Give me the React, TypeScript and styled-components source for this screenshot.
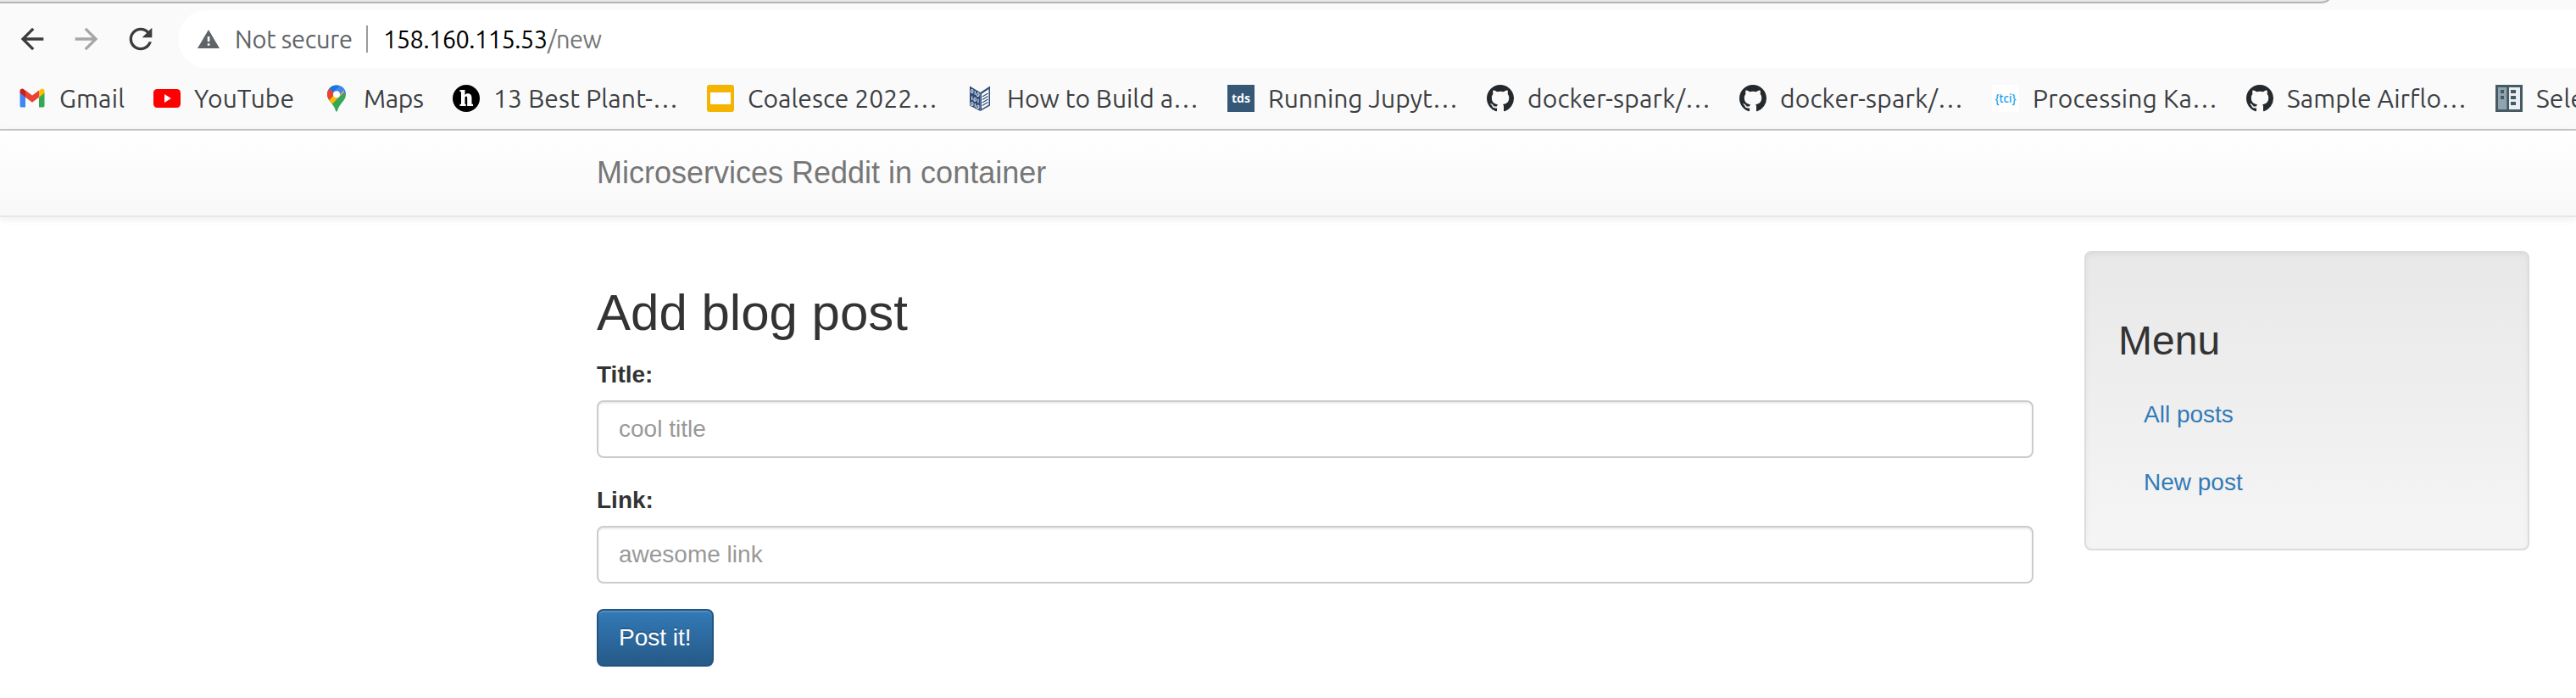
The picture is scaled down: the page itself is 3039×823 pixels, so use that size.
import React, { useLayoutEffect, useRef, useState } from "react";
import styled, { createGlobalStyle } from "styled-components";

const GlobalStyle = createGlobalStyle`
  *, *::before, *::after { box-sizing: border-box; }
  html, body { margin: 0; padding: 0; background: #fff; overflow: hidden; }
  body {
    font-family: "Liberation Sans", Arial, sans-serif;
    font-size: 28px;
    line-height: 40px;
    color: #333;
  }
`;

const chromeFont = `Ubuntu, "Noto Sans", sans-serif`;

/* ---------- browser chrome ---------- */

const Browser = styled.header`
  width: 100%;
  height: 154px;
  background: #fafafa;
  border-bottom: 2px solid #c6c6c6;
  overflow: hidden;
`;

const TabStrip = styled.div`
  height: 12px;
  overflow: hidden;
`;

const TabStripEdge = styled.div`
  width: 2754px;
  height: 24px;
  margin-top: -20px;
  background: #e8e8e8;
  border-right: 2px solid #b4b4b4;
  border-bottom: 2px solid #b4b4b4;
  border-bottom-right-radius: 16px;
`;

const Toolbar = styled.div`
  display: flex;
  align-items: center;
  height: 68px;
  padding-left: 18px;
`;

const NavIcon = styled.svg<{ $muted?: boolean }>`
  flex: none;
  width: 40px;
  height: 40px;
  margin-right: 24px;
  fill: ${(p) => (p.$muted ? "#a6a6a6" : "#3c3c3c")};
`;

const AddressBar = styled.div`
  display: flex;
  align-items: center;
  flex: 1;
  height: 68px;
  padding-left: 23px;
  background: #fff;
  border-radius: 34px 0 0 34px;
  font-family: ${chromeFont};
  font-size: 29px;
  color: #5f6368;
`;

const WarningIcon = styled.svg`
  width: 26px;
  height: 22px;
  margin-right: 18px;
`;

const Divider = styled.span`
  width: 2px;
  height: 32px;
  margin: 0 18px 0 16px;
  background: #9a9a9c;
`;

const Bookmarks = styled.nav`
  display: flex;
  align-items: center;
  gap: 34px;
  height: 72px;
  padding-left: 22px;
  font-family: ${chromeFont};
  font-size: 30px;
  color: #3c4043;
`;

const Bookmark = styled.a`
  display: flex;
  flex: none;
  align-items: center;
  gap: 16px;
  color: inherit;
`;

const Favicon = styled.svg`
  flex: none;
  width: 32px;
  height: 32px;
`;

const LabelBox = styled.span<{ $width: number; $color?: string }>`
  display: block;
  flex: none;
  width: ${(p) => p.$width}px;
  color: ${(p) => p.$color ?? "inherit"};
  white-space: nowrap;
`;

/* Spreads a label's letters so that it fills its slot in the toolbar. */
function Label({ text, width, color }: { text: string; width: number; color?: string }) {
  const ref = useRef<HTMLSpanElement>(null);
  const [spacing, setSpacing] = useState(0);
  useLayoutEffect(() => {
    if (ref.current) {
      const natural = ref.current.getBoundingClientRect().width;
      setSpacing((width - natural) / (text.length - 1));
    }
  }, [text, width]);
  return (
    <LabelBox $width={width} $color={color}>
      <span ref={ref} style={{ letterSpacing: spacing }}>{text}</span>
    </LabelBox>
  );
}

const GmailIcon = () => (
  <Favicon viewBox="0 0 32 32">
    <path d="M1.500 9v15.500A1.8 1.8 0 0 0 3.300 26.600H8V14.300z" fill="#4285f4" />
    <path d="M24 14.300v12.300h4.700a1.800 1.800 0 0 0 1.800-1.800V9z" fill="#34a853" />
    <path d="M24 7.200v7.600l6.500-5.300V7.700c0-2.600-2.700-4-4.500-2.400z" fill="#fbbc04" />
    <path d="M8 14.800V6.500l8 6 8-6v8.300l-8 6z" fill="#ea4335" />
    <path d="M1.500 7.700v1.800l6.500 5.300V6.800L6 5.300C4.200 3.700 1.500 5.100 1.500 7.700z" fill="#c5221f" />
  </Favicon>
);

const YouTubeIcon = () => (
  <Favicon viewBox="0 0 32 32">
    <rect x="0" y="5" width="32" height="22" rx="4.500" fill="#f00" />
    <path d="M13 11v10l7.800-5z" fill="#fff" />
  </Favicon>
);

const MapsIcon = () => (
  <Favicon viewBox="0 0 32 32">
    <defs>
      <clipPath id="pin">
        <path d="M16 0.500C9.700.5 5 5.300 5 11.300c0 4.200 2 6.500 4.600 9.700C12.300 24.300 14 27 15 30.700c.4 1.200 1.600 1.200 2 0C18 27 19.700 24.300 22.400 21c2.600-3.200 4.600-5.500 4.600-9.700C27 5.300 22.300.5 16 .5z" />
      </clipPath>
    </defs>
    <g clipPath="url(#pin)">
      <rect width="32" height="32" fill="#34a853" />
      <path d="M4 22 27 -2 34 4 10 22z" fill="#4285f4" />
      <path d="M3 18 16 11 25 5 24.500 9 10.500 23z" fill="#fbbc04" />
      <path d="M16 11 24 2 32 0 25.500 5.500 16 16z" fill="#4285f4" />
      <path d="M3 3 8 4.500 15 10 5.500 20 0 14z" fill="#ea4335" />
      <path d="M7 4 12 0H20L19.500 1.500 12.500 9z" fill="#1a73e8" />
      <path d="M19.500 1 12.500 9 16 12 24.500 3z" fill="#4285f4" />
    </g>
    <circle cx="16" cy="11.300" r="4" fill="#fff" />
  </Favicon>
);

const HIcon = () => (
  <Favicon viewBox="0 0 32 32">
    <circle cx="16" cy="16" r="16" fill="#000" />
    <path d="M8.500 6H14.500v6c.9-1.200 2-1.800 3.400-1.800 3 0 4.600 1.800 4.600 5.300v7.300H24V25h-6.800v-9c0-1.700-.4-2.500-1.300-2.500s-1.400.9-1.400 2.600v6.700h1.200V25H8.500v-2.200H10V8.200H8.500z" fill="#fff" />
  </Favicon>
);

const SlidesIcon = () => (
  <Favicon viewBox="0 0 32 32">
    <rect width="32" height="32" rx="3" fill="#f5b400" />
    <rect x="4" y="9" width="24" height="14" fill="#fff" />
  </Favicon>
);

const BinaryBookIcon = () => (
  <Favicon viewBox="0 0 32 32">
    <path d="M4 1.500 16.500 9V31L4 24.500z" fill="#2f4d78" />
    <path d="M16.500 9 28 1.500V24.500L16.500 31z" fill="#2f4d78" />
    <path d="M18 10.800 26.500 5V23.500L18 28.500z" fill="#fafafa" />
    <path d="M19 14 25.500 10M19 17.500 25.500 13.500M19 21 25.500 17M19 24.500 25.500 20.500" stroke="#2f4d78" strokeWidth="1.300" />
    <g fill="none" stroke="#e8eef6" strokeWidth="1.100">
      <ellipse cx="6.700" cy="7.500" rx="1.300" ry="2" />
      <path d="M10.300 7.200v4.500M6.700 13.500v4.500M14 16.800v4.500M10.300 22v4.500" />
      <ellipse cx="13.700" cy="11.500" rx="1.300" ry="2" />
      <ellipse cx="10.200" cy="17.200" rx="1.300" ry="2" />
      <ellipse cx="6.700" cy="22.500" rx="1.300" ry="2" />
      <ellipse cx="13.700" cy="26" rx="1.300" ry="2" />
    </g>
  </Favicon>
);

const TdsIcon = () => (
  <Favicon viewBox="0 0 32 32">
    <rect width="32" height="32" fill="#355876" />
    <text x="16" y="21" textAnchor="middle" textLength="22" lengthAdjust="spacingAndGlyphs" fontFamily="Open Sans" fontWeight="700" fontSize="14" fill="#fff">tds</text>
  </Favicon>
);

const GitHubIcon = () => (
  <Favicon viewBox="0 0 16 16">
    <path
      fill="#24292e"
      d="M8 0C3.580 0 0 3.580 0 8c0 3.540 2.290 6.530 5.470 7.590.4.070.55-.17.55-.38 0-.19-.01-.82-.01-1.490-2.010.37-2.530-.49-2.690-.94-.09-.23-.48-.94-.82-1.130-.28-.15-.68-.52-.01-.53.63-.01 1.080.58 1.230.82.72 1.210 1.870.87 2.330.66.07-.52.28-.87.51-1.070-1.780-.2-3.640-.89-3.640-3.950 0-.87.31-1.590.82-2.150-.08-.2-.36-1.020.08-2.120 0 0 .67-.21 2.200.82.64-.18 1.320-.27 2-.27s1.360.09 2 .27c1.530-1.040 2.200-.82 2.200-.82.44 1.100.16 1.920.08 2.120.51.56.82 1.270.82 2.150 0 3.070-1.870 3.750-3.650 3.950.29.25.54.73.54 1.480 0 1.070-.01 1.930-.01 2.200 0 .21.15.46.55.38A8.010 8.010 0 0 0 16 8c0-4.420-3.580-8-8-8z"
    />
  </Favicon>
);

const TciIcon = () => (
  <Favicon viewBox="0 0 32 32">
    <rect width="32" height="32" fill="#fff" />
    <text x="16" y="20.500" textAnchor="middle" textLength="25" lengthAdjust="spacingAndGlyphs" fontFamily="Noto Sans" fontSize="15" fontWeight="500" fill="#16a0e8">{"{tci}"}</text>
  </Favicon>
);

const BuildingIcon = () => (
  <Favicon viewBox="0 0 32 32">
    <rect width="32" height="32" fill="#455a64" />
    <rect x="3" y="3" width="10.300" height="26" fill="#90a4ae" />
    <rect x="16" y="3" width="13" height="26" fill="#eceff1" />
    <path d="M6 6h4v4H6zM6 13h4v4H6zM18 6h6v4H18zM18 13h6v4H18zM18 20h6v4H18z" fill="#455a64" />
  </Favicon>
);

const bookmarks = [
  { text: "Gmail", width: 77, Icon: GmailIcon },
  { text: "YouTube", width: 118, Icon: YouTubeIcon },
  { text: "Maps", width: 71, Icon: MapsIcon },
  { text: "13 Best Plant-…", width: 218, Icon: HIcon },
  { text: "Coalesce 2022…", width: 224, Icon: SlidesIcon },
  { text: "How to Build a…", width: 226, Icon: BinaryBookIcon },
  { text: "Running Jupyt…", width: 224, Icon: TdsIcon },
  { text: "docker-spark/…", width: 216, Icon: GitHubIcon },
  { text: "docker-spark/…", width: 216, Icon: GitHubIcon },
  { text: "Processing Ka…", width: 218, Icon: TciIcon },
  { text: "Sample Airflo…", width: 212, Icon: GitHubIcon },
  { text: "Sele", width: 57, Icon: BuildingIcon },
];

/* ---------- page ---------- */

const Navbar = styled.nav`
  height: 102px;
  margin-bottom: 40px;
  padding: 30px 0 0 704px;
  border-bottom: 2px solid #e7e7e7;
  background: linear-gradient(to bottom, #fff 0%, #f8f8f8 100%);
  box-shadow: 0 2px 10px rgba(0, 0, 0, 0.075);
`;

const Brand = styled.a`
  font-size: 36px;
  line-height: 40px;
  color: #777;
`;

const Columns = styled.main`
  display: grid;
  grid-template-columns: 1695px 525px;
  column-gap: 60px;
  align-items: start;
  padding-left: 704px;
`;

const Form = styled.form`
  display: flex;
  flex-direction: column;
  align-items: flex-start;
`;

const Title = styled.h2`
  margin: 40px 0 20px;
  font-size: 60px;
  font-weight: 500;
  line-height: 66px;
`;

const Field = styled.div`
  width: 100%;
  margin-bottom: 30px;
`;

const FieldLabel = styled.label`
  display: block;
  margin-bottom: 10px;
  font-weight: 700;
`;

const Input = styled.input`
  display: block;
  width: 100%;
  height: 68px;
  padding: 12px 24px;
  border: 2px solid #ccc;
  border-radius: 8px;
  background: #fff;
  box-shadow: inset 0 2px 2px rgba(0, 0, 0, 0.075);
  font: inherit;
  color: #555;
  &::placeholder { color: #999; opacity: 1; }
`;

const SubmitButton = styled.button`
  height: 68px;
  padding: 12px 24px;
  border: 2px solid #245580;
  border-radius: 8px;
  background: linear-gradient(to bottom, #337ab7 0%, #265a88 100%);
  box-shadow: inset 0 2px 0 rgba(255, 255, 255, 0.15), 0 2px 2px rgba(0, 0, 0, 0.075);
  font: inherit;
  color: #fff;
  text-shadow: 0 -2px 0 rgba(0, 0, 0, 0.2);
`;

const Well = styled.aside`
  height: 353px;
  padding: 38px;
  border: 2px solid #dcdcdc;
  border-radius: 8px;
  background: linear-gradient(to bottom, #e8e8e8 0%, #f5f5f5 100%);
  box-shadow: inset 0 2px 6px rgba(0, 0, 0, 0.05), 0 2px 0 rgba(255, 255, 255, 0.1);
`;

const WellTitle = styled.h3`
  margin: 40px 0 20px;
  font-size: 48px;
  font-weight: 500;
  line-height: 52.8px;
`;

const MenuLink = styled.a`
  display: block;
  padding: 20px 30px;
  color: #337ab7;
`;

export default function App() {
  return (
    <>
      <GlobalStyle />
      <Browser>
        <TabStrip><TabStripEdge /></TabStrip>
        <Toolbar>
          <NavIcon viewBox="0 0 24 24"><path d="M20 11H7.830l5.590-5.590L12 4l-8 8 8 8 1.410-1.410L7.830 13H20v-2z" /></NavIcon>
          <NavIcon viewBox="0 0 24 24" $muted><path d="M12 4l-1.410 1.410L16.170 11H4v2h12.170l-5.580 5.590L12 20l8-8z" /></NavIcon>
          <NavIcon viewBox="0 0 24 24"><path d="M17.650 6.350C16.200 4.900 14.210 4 12 4c-4.420 0-7.990 3.580-7.990 8s3.570 8 7.990 8c3.730 0 6.840-2.550 7.730-6h-2.080c-.82 2.330-3.040 4-5.650 4-3.310 0-6-2.690-6-6s2.690-6 6-6c1.660 0 3.140.69 4.220 1.780L13 11h7V4l-2.350 2.350z" /></NavIcon>
          <AddressBar>
            <WarningIcon viewBox="0 0 26 22">
              <path d="M13 0 26 22H0z" fill="#5f6368" />
              <path d="M11.800 8h2.600v6h-2.600zM11.800 16.200h2.600v2.600h-2.600z" fill="#fff" />
            </WarningIcon>
            <Label text="Not secure" width={139} />
            <Divider />
            <Label text="158.160.115.53" width={194} color="#000" />
            <Label text="/new" width={64} color="#757779" />
          </AddressBar>
        </Toolbar>
        <Bookmarks>
          {bookmarks.map(({ text, width, Icon }, i) => (
            <Bookmark key={i}>
              <Icon />
              <Label text={text} width={width} />
            </Bookmark>
          ))}
        </Bookmarks>
      </Browser>
      <Navbar><Brand>Microservices Reddit in container</Brand></Navbar>
      <Columns>
        <Form>
          <Title>Add blog post</Title>
          <Field>
            <FieldLabel htmlFor="title">Title:</FieldLabel>
            <Input id="title" placeholder="cool title" />
          </Field>
          <Field>
            <FieldLabel htmlFor="link">Link:</FieldLabel>
            <Input id="link" placeholder="awesome link" />
          </Field>
          <SubmitButton type="button">Post it!</SubmitButton>
        </Form>
        <Well>
          <WellTitle>Menu</WellTitle>
          <MenuLink>All posts</MenuLink>
          <MenuLink>New post</MenuLink>
        </Well>
      </Columns>
    </>
  );
}
